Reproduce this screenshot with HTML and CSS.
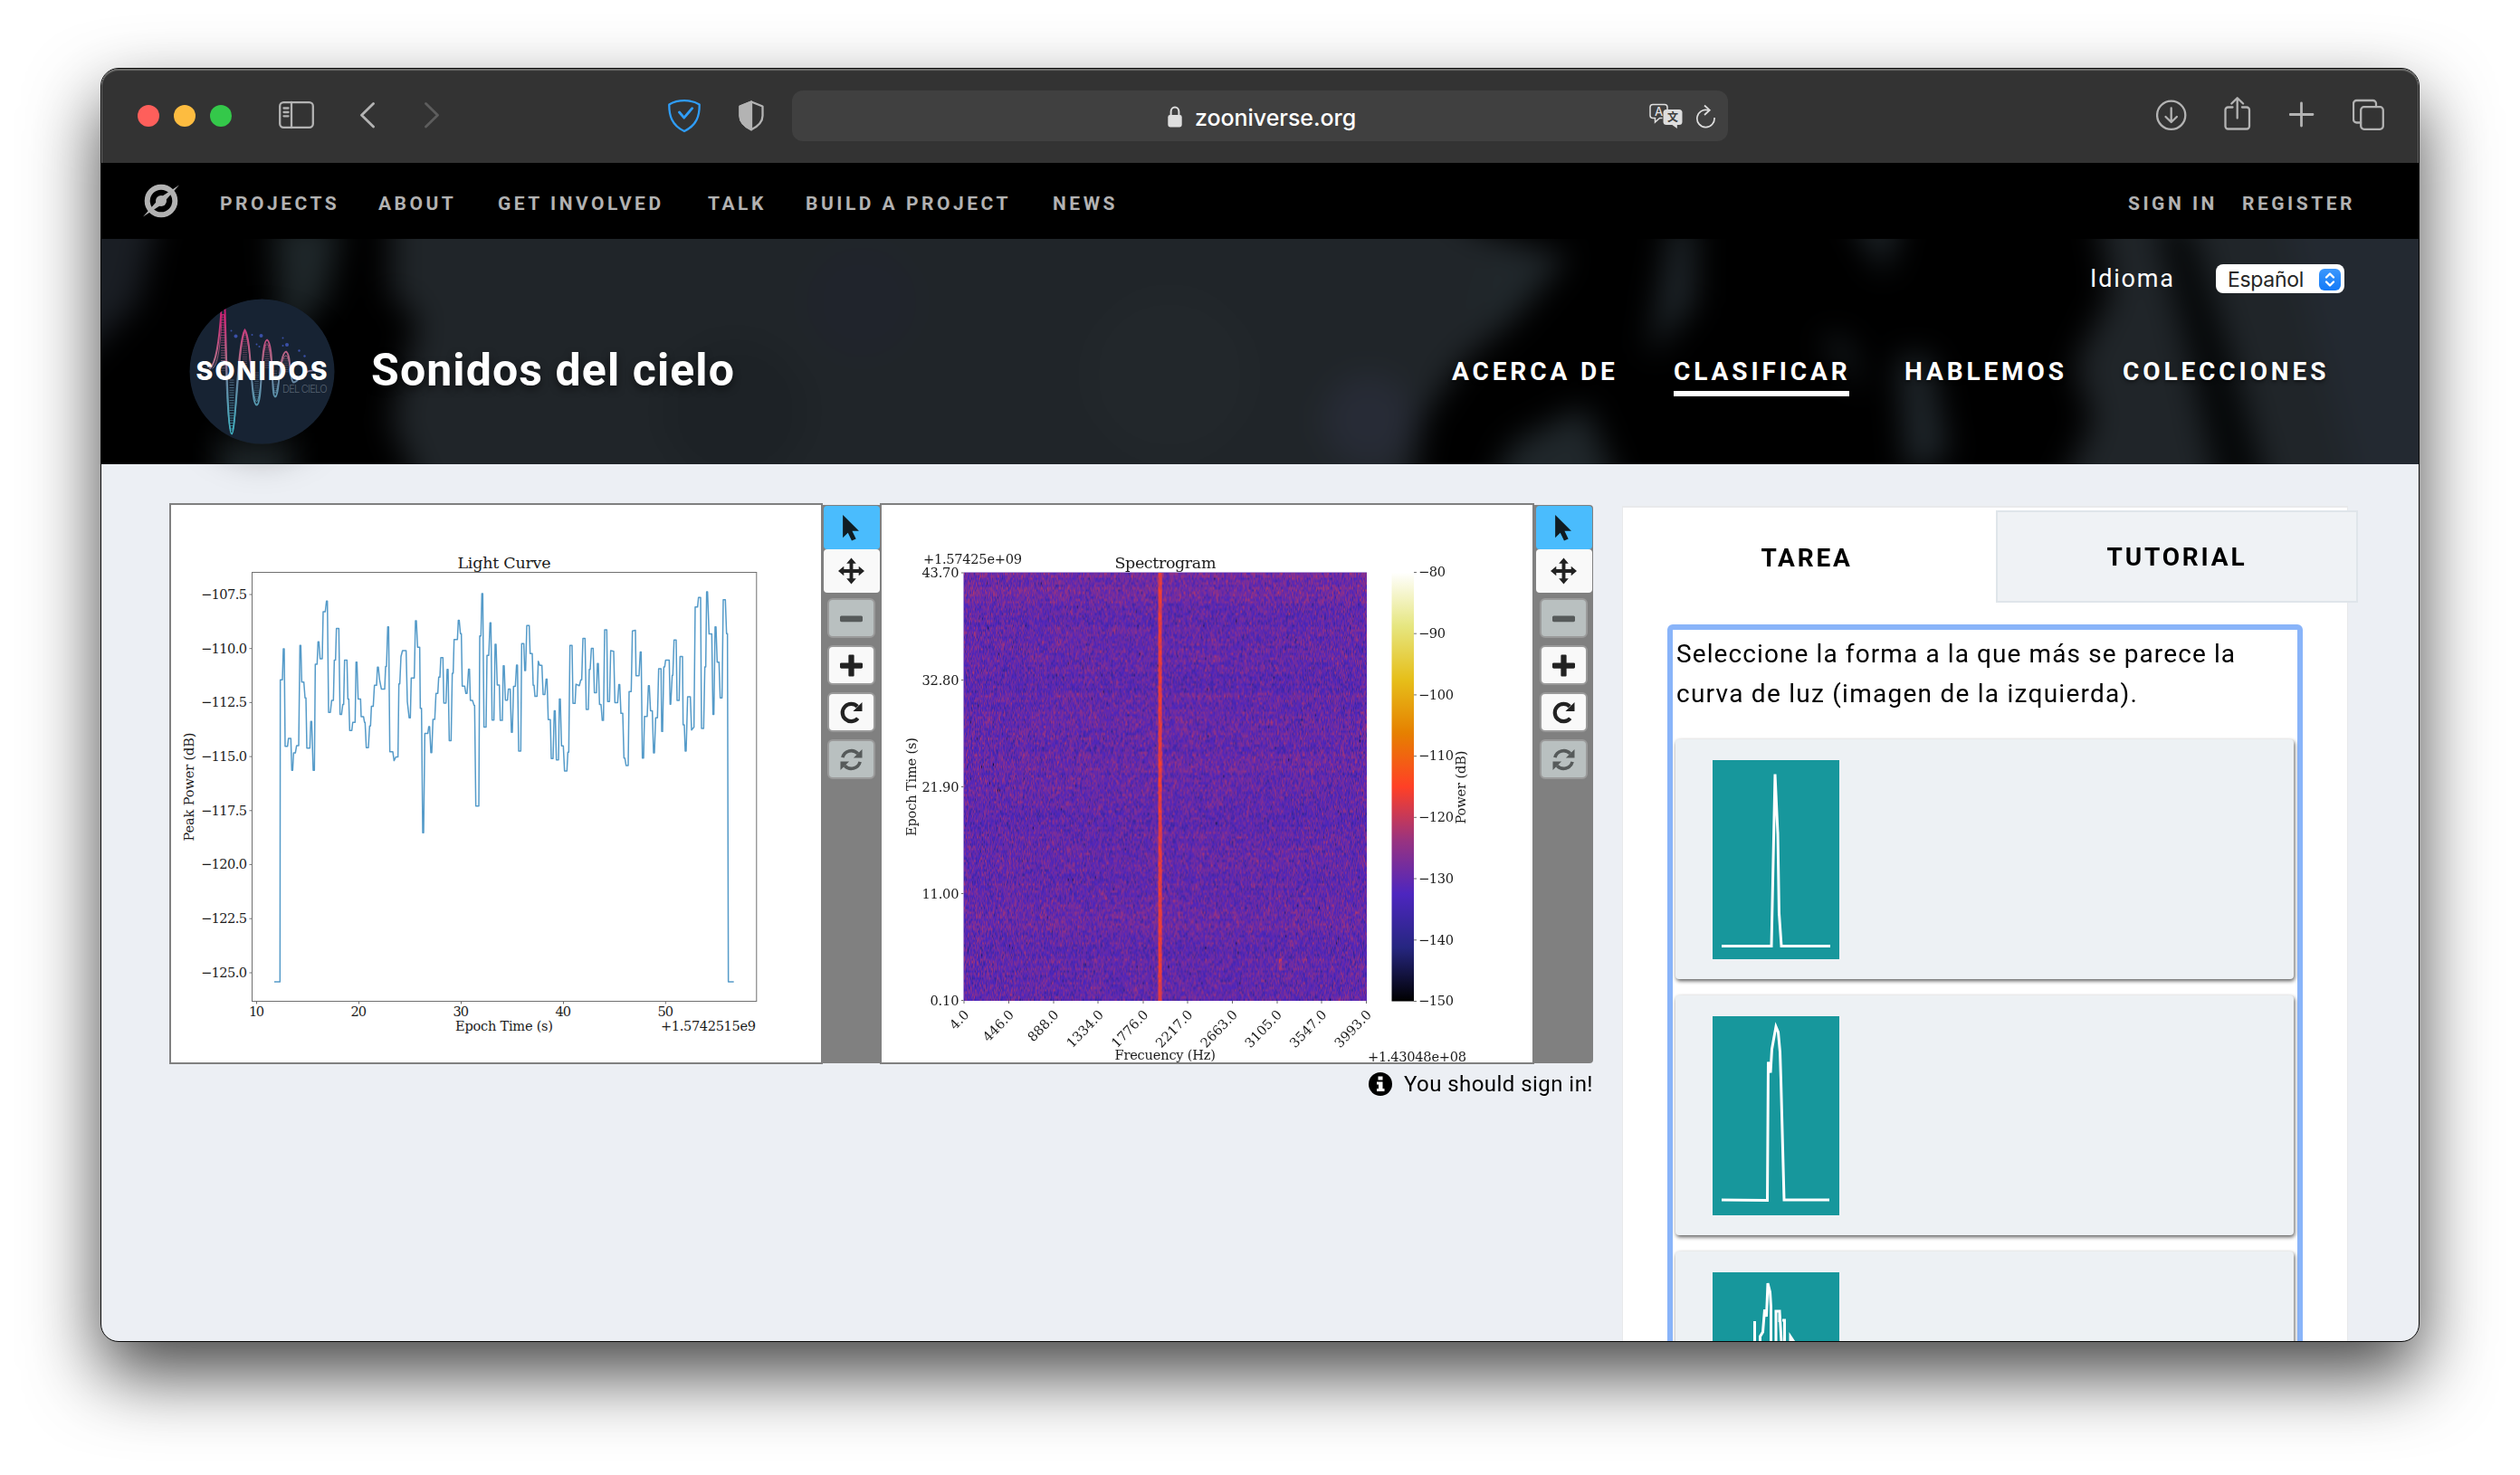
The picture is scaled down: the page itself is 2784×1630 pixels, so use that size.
FILE: index.html
```html
<!DOCTYPE html>
<html lang="es">
<head>
<meta charset="utf-8">
<title>Sonidos del cielo</title>
<link rel="stylesheet" href="styles.css">
</head>
<body>
<div class="window">
  <div class="toolbar">
    <div class="lights"><i class="light red"></i><i class="light amber"></i><i class="light green"></i></div>
    <svg class="ic sidebar" width="39" height="44" viewBox="308 106 39 44"><rect x="309.2" y="113.2" width="36.6" height="27.6" rx="4"/><path d="M322 113v28M313.500 119.500h5M313.500 124h5M313.500 128.300h5" /></svg>
    <svg class="ic back" width="16" height="44" viewBox="398 106 16 44"><path d="M412.500 114.500l-13 12.700 13 12.700" stroke-width="2.8"/></svg>
    <svg class="ic fwd" width="16" height="44" viewBox="469 106 16 44"><path d="M470.500 114.500l13 12.700-13 12.700" stroke-width="2.8"/></svg>
    <svg class="ic guard" width="36" height="44" viewBox="738 106 36 44"><path d="M756 111.200c-6 0-11.500 1.200-16.700 4.200-.2 12 2.700 22.800 16.700 29.600 14-6.800 16.900-17.600 16.700-29.600-5.200-3-10.700-4.200-16.700-4.200z"/><path d="M750.500 124l5.200 6.200 9-10.500" stroke-width="2.8"/></svg>
    <svg class="ic half" width="28" height="44" viewBox="816 106 28 44"><path d="M830 112.500l12.500 5v10.500c0 6.500-4 11-12.500 15.300-8.500-4.300-12.500-8.800-12.500-15.300v-10.500z"/><path d="M830 112.500l-12.500 5v10.500c0 6.500 4 11 12.500 15.300z" class="fill"/></svg>
    <div class="address">
      <svg class="lock" width="16" height="24" viewBox="0 0 16 24"><path d="M3.600 11V6.500a4.400 5 0 0 1 8.800 0V11" fill="none" stroke="#dedede" stroke-width="2"/><rect x=".3" y="10" width="15.400" height="13.500" rx="2.400" fill="#dedede"/></svg>
      <span class="url">zooniverse.org</span>
      <svg class="tr" width="74" height="28" viewBox="1821 114 74 28"><path d="M1842 121v-2.500a3 3 0 0 0-3-3h-13a3 3 0 0 0-3 3v9a3 3 0 0 0 3 3h2.500v4.500l5-4.500h3" fill="none" stroke="#dedede" stroke-width="1.500"/><rect x="1837.500" y="121" width="21" height="17" rx="3.500" fill="#dedede"/><path d="M1846 137l6.800 5v-6z" fill="#dedede"/><text x="1832.700" y="127.500" class="tra">A</text><text x="1848" y="134" class="trz">文</text><path d="M1887.200 121.800A9.600 9.600 0 1 0 1894 130M1883 116.500l5.800 5.200-5.800 5.300" fill="none" stroke="#dedede" stroke-width="1.700"/></svg>
    </div>
    <svg class="ic dl" width="34" height="44" viewBox="2382 106 34 44"><circle cx="2398.700" cy="127.300" r="15.600"/><path d="M2398.700 119.500v15M2392.500 129l6.200 6 6.200-6"/></svg>
    <svg class="ic share" width="30" height="44" viewBox="2457 106 30 44"><path d="M2466.500 118.500h-5a3 3 0 0 0-3 3v18a3 3 0 0 0 3 3h20.500a3 3 0 0 0 3-3v-18a3 3 0 0 0-3-3h-5M2471.700 130.500v-22M2465.300 114.500l6.400-6.300 6.400 6.300"/></svg>
    <svg class="ic plus" width="28" height="44" viewBox="2529 106 28 44"><path d="M2542.500 114v25M2530 126.500h25" stroke-width="2.800"/></svg>
    <svg class="ic tabs" width="36" height="44" viewBox="2599 106 36 44"><rect x="2608.200" y="118.200" width="24.600" height="24.600" rx="3.500"/><path d="M2608 135.500h-4.500a3.500 3.500 0 0 1-3.500-3.500v-17.500a3.500 3.500 0 0 1 3.500-3.500h18a3.500 3.500 0 0 1 3.500 3.500v3.500"/></svg>
  </div>

  <nav class="site">
    <svg class="zoo" width="42" height="40" viewBox="0 0 42 40"><circle cx="21" cy="20" r="15.300" fill="none" stroke="#b2b2b2" stroke-width="6"/><circle cx="21" cy="20" r="6" fill="#b2b2b2"/><path d="M1 37.500L18 18.500l6 4z M41 2.500L24 21.500l-6-4z" fill="#b2b2b2"/></svg>
    <div class="links">
      <a class="s1">PROJECTS</a><a class="s2">ABOUT</a><a class="s3">GET INVOLVED</a><a class="s4">TALK</a><a class="s5">BUILD A PROJECT</a><a class="s6">NEWS</a>
    </div>
    <div class="account"><a class="s7">SIGN IN</a><a class="s8">REGISTER</a></div>
  </nav>

  <header class="hero">
    <svg class="sky" viewBox="0 0 2560 249" preserveAspectRatio="none">
      <defs><filter id="soft" x="-10%" y="-30%" width="120%" height="160%" color-interpolation-filters="sRGB"><feGaussianBlur stdDeviation="17"/></filter></defs>
      <rect width="2560" height="249" fill="#202529"/>
      <g filter="url(#soft)">
        <path d="M-60-60H2620V310H-60z" fill="#202529"/>
        <path d="M-60-40H70L40 70 0 180h-60z" fill="#1a1e24"/>
        <path d="M70-60h250l0 120 30 30-30 110 50 120H-80V190L40 70z" fill="#000"/>
        <path d="M190-20h75l-15 80-50 60zM130 215h80v80h-80z" fill="#1f272a"/>
        <circle cx="840" cy="70" r="60" fill="#20242c"/><circle cx="700" cy="190" r="80" fill="#1d2226"/><circle cx="1180" cy="150" r="90" fill="#22272b"/><circle cx="1400" cy="200" r="50" fill="#272b36"/>
        <path d="M1455-60h745l20 120-40 80 20 60-60 130H1440l20-130 40-60 60-50 60-70-100-30z" fill="#000"/>
        <path d="M1530 25l90-10-50 60-60 20zM1560 225l80-40 40 100h-150z" fill="#20272b"/>
        <path d="M1735-20h25v90l-50 60zM1930-30h60l-20 70zM1900 110h25l25 60zM1985 130h35l20 110-45 20z" fill="#20272c"/>
        <circle cx="2160" cy="110" r="30" fill="#000"/>
        <path d="M2270-20h36l50 160 50 180h-60l-40-190z" fill="#050708"/>
        <path d="M2400-60h230v370h-130z" fill="#232931"/>
      </g>
    </svg>
    <div class="lang"><span class="idioma">Idioma</span><span class="select">Español<svg width="24" height="24" viewBox="0 0 24 24"><defs><linearGradient id="bl" x1="0" y1="0" x2="0" y2="1"><stop offset="0" stop-color="#3b97fc"/><stop offset="1" stop-color="#137af8"/></linearGradient></defs><rect width="24" height="24" rx="6" fill="url(#bl)"/><path d="M8 9.500l4-4 4 4M8 14.500l4 4 4-4" fill="none" stroke="#fff" stroke-width="2.400" stroke-linecap="round" stroke-linejoin="round"/></svg></span></div>
    <div class="brand">
      <svg class="avatar" viewBox="208.500 330.500 161 161">
        <defs><linearGradient id="wave" gradientUnits="userSpaceOnUse" x1="0" y1="342" x2="0" y2="480"><stop offset="0" stop-color="#d61b74"/><stop offset=".4" stop-color="#b56b88"/><stop offset=".55" stop-color="#6c87a4"/><stop offset="1" stop-color="#3fb4c4"/></linearGradient><clipPath id="disc"><circle cx="289" cy="411" r="80"/></clipPath></defs>
        <circle cx="289" cy="411" r="80" fill="#172333"/>
        <g clip-path="url(#disc)" fill="none" stroke="url(#wave)">
          <path d="M231 408c8-6 11-34 13-66h4c2 60 3 138 7.500 138s6-100 14.500-115c8 10 6 83 13 83s4-70 11.500-72c8 4 4 63 9 63s4-48 12-50c6 3 3 30 8 34 7 0 8-14 24-13" stroke-width="1.800"/>
          <path d="M234 408c8-6 9-34 11-60h2c2 55 3 128 8.500 128s8-98 14.500-108c6 8 8 76 13 76s6-62 11.500-64c5 4 6 55 9 55s6-40 12-42c4 3 5 22 8 26" stroke-width="1" opacity=".8"/>
          <path d="M246 348v62M255.500 420v55" stroke-width="5" stroke-dasharray="1 1.800" opacity=".6"/>
          <path d="M270 368v38M283 412v34M294.500 382v26M303 410v27M315.500 394v18" stroke-width="5" stroke-dasharray="1 1.400" opacity=".4"/>
        </g>
        <g fill="#3a50a8"><circle cx="260" cy="372" r="2"/><circle cx="255" cy="366" r="1"/><circle cx="288" cy="371.500" r="2"/><circle cx="278" cy="370.500" r="1"/><circle cx="283" cy="381" r="1"/><circle cx="286" cy="383.500" r="1"/><circle cx="312" cy="374" r="1"/><circle cx="316.500" cy="381.500" r="2"/><circle cx="312" cy="382.500" r="1"/><circle cx="330" cy="388" r="1.200"/><circle cx="336" cy="394" r="1.200"/></g>
        <text x="216" y="420.800" textLength="145" class="lg1">SONIDOS</text>
        <text x="311.500" y="434.500" textLength="49.500" class="lg2">DEL CIELO</text>
      </svg>
      <h1>Sonidos del cielo</h1>
      <nav class="project"><a class="p1">ACERCA DE</a><a class="p2 on">CLASIFICAR</a><a class="p3">HABLEMOS</a><a class="p4">COLECCIONES</a></nav>
    </div>
  </header>

  <main>
    <section class="subject">
      <div class="frames">
        <svg class="plot" width="722" height="620" viewBox="187 556 722 620">
          <g class="axis"><rect x="278.500" y="632.500" width="557.300" height="474" />
          <path d="M275.500 657h3M275.500 716.700h3M275.500 776.400h3M275.500 836.100h3M275.500 895.800h3M275.500 955.400h3M275.500 1015.200h3M275.500 1075h3M283.500 1107v2.500M396.500 1107v2.500M509.500 1107v2.500M622.500 1107v2.500M735.300 1107v2.500"/></g>
          <g class="curve"><g transform="translate(180 550) scale(.33333 .40816)"><path d="M369 1311H388L389 493H396L399 409H402L405 673H413L416 652H424L427 738H430L433 691H439L443 671H450L454 400H457L460 499H467L471 542H474L477 678H487L490 606H493L498 738H502L505 451H511L514 390H517L521 436H528L531 309H538L542 280H545L549 581H555L559 549H565L568 440H572L575 354H583L587 587H592L596 560H599L602 440H610L613 545H616L619 630H626L629 608H637L640 445H643L647 545H655L657 593H665L668 608H670L674 677H681L685 618H688L691 565H697L701 508H708L711 459H714L718 493L724 518H735L738 457H741L745 350H748L752 688H762L766 712L772 702H779L782 504H785L789 430L794 414H806L810 552L816 596H820L823 488H833L837 333H840L844 405H851L853 570H857L861 907H864L868 638H878L881 620H884L888 690H891L895 600H901L905 530H911L914 486H918L921 433H928L931 556H938L942 465H945L949 658H955L959 475H962L965 384H976L979 332H982L986 368H989L992 510H1000L1004 530H1008L1013 464H1016L1019 549H1026L1031 562H1033L1037 835H1047L1050 374H1054"/></g>
          <g transform="translate(520 550) scale(.33333 .40816)"><path d="M30 374H34L37 260H40L44 621H51L54 427H60L64 339H67L71 602H77L81 397H84L88 507H95L98 603H105L108 455H111L115 548H122L125 518H131L135 635H138L142 511H148L152 453H155L159 686H166L169 395H176L179 468H182L186 346H194L197 422H204L207 508H210L213 538H220L224 443L229 454H236L240 533H246L250 491H253L257 601H264L267 706H273L277 577H280L284 710H291L294 545H297L301 672H307L311 740H319L322 689H325L329 400H336L339 557H346L349 505L360 509L365 493H368L372 381H379L383 573H390L393 465H396L400 408H406L410 528H417L420 449H423L427 560H432L436 603H440L444 358H451L454 552H460L464 414L474 416L478 555H487L491 506H494L498 584H504L508 705H511L515 725H522L525 525H532L536 361L546 359L548 482H558L562 418H565L569 705H573L576 592H585L589 509H592L596 577H602L606 691H609L613 596H619L623 463H631L633 633H636L640 458H643L646 440H658L661 559H663L668 481H670L674 385H681L684 549H691L694 430H702L704 615H708L711 686H714L719 539H728L732 629L740 621L744 296H752L755 270H762L765 625H772L776 458H779L782 255H785L790 369H799L803 587H806L810 350H813L817 445H823L827 542H833L837 276H844L848 368H851L854 1311H872"/></g></g>
          <g class="cap"><text x="505.500" y="627.500" textLength="103" class="ttl">Light Curve</text>
          <text x="222" y="661.800" textLength="51">−107.5</text><text x="222" y="721.500" textLength="51">−110.0</text><text x="222" y="781.200" textLength="51">−112.5</text><text x="222" y="840.900" textLength="51">−115.0</text><text x="222" y="900.600" textLength="51">−117.5</text><text x="222" y="960.200" textLength="51">−120.0</text><text x="222" y="1020" textLength="51">−122.5</text><text x="222" y="1079.800" textLength="51">−125.0</text>
          <text x="275" y="1122.500" textLength="17">10</text><text x="387.500" y="1122.500" textLength="17.500">20</text><text x="500.500" y="1122.500" textLength="17.500">30</text><text x="613.500" y="1122.500" textLength="17.500">40</text><text x="726.500" y="1122.500" textLength="17.500">50</text>
          <text x="503" y="1139" textLength="108">Epoch Time (s)</text><text x="730" y="1138.500" textLength="105">+1.5742515e9</text>
          <text transform="translate(213.500 929.500) rotate(-90)" textLength="120">Peak Power (dB)</text></g>
        </svg>
        <div class="tools">
          <span class="tool wide sel"><svg viewBox="0 0 24 32"><path d="M2 1v27l6-6 4.500 9.500 5-2.300L13 20h8z"/></svg></span>
          <span class="tool wide"><svg viewBox="0 0 30 30"><path d="M15 0l5.500 6.500H17V13h6.500V9.500L30 15l-6.500 5.500V17H17v6.500h3.500L15 30l-5.500-6.500H13V17H6.500v3.500L0 15l6.500-5.500V13H13V6.500H9.500z"/></svg></span>
          <span class="tool off"><svg viewBox="0 0 24 24"><rect y="9" width="24" height="6.500" rx="1.500"/></svg></span>
          <span class="tool"><svg viewBox="0 0 24 24"><path d="M9 1.500Q9 .5 10 .5h4q1 0 1 1V9h7.500q1.500 0 1.500 1v4q0 1-1.500 1H15v7.500q0 1-1 1h-4q-1 0-1-1V15H1.500Q0 15 0 14v-4q0-1 1.500-1H9z"/></svg></span>
          <span class="tool"><svg viewBox="0 0 26 26"><path d="M20.500 19.500A10 10 0 1 1 20 6" fill="none" stroke="currentColor" stroke-width="4.400"/><path d="M25.500 1v10.500H15z"/></svg></span>
          <span class="tool off"><svg viewBox="0 0 26 26"><path d="M3 10.500A10.300 10.300 0 0 1 20.500 6M23 15.500A10.300 10.300 0 0 1 5.500 20" fill="none" stroke="currentColor" stroke-width="3.800"/><path d="M25.500 1v10H15.500zM.5 25V15h10z"/></svg></span>
        </div>
        <svg class="plot" width="723" height="620" viewBox="972 556 723 620">
          <defs><linearGradient id="cmr" x1="0" y1="1" x2="0" y2="0"><stop offset="0" stop-color="#000"/><stop offset=".125" stop-color="#262680"/><stop offset=".25" stop-color="#4d26bf"/><stop offset=".375" stop-color="#993380"/><stop offset=".5" stop-color="#ff4026"/><stop offset=".625" stop-color="#e68000"/><stop offset=".75" stop-color="#e6bf1a"/><stop offset=".875" stop-color="#e6e680"/><stop offset="1" stop-color="#fff"/></linearGradient></defs>
          <rect x="1064.500" y="632.500" width="445.500" height="473.500" fill="#612ea8"/>
          <foreignObject x="1064.500" y="632.500" width="445.500" height="473.500"><canvas id="spectrum" width="446" height="182"></canvas></foreignObject>
          <rect x="1537.500" y="632.500" width="24.500" height="474" fill="url(#cmr)"/>
          <path class="axis" d="M1062 633h2.500M1062 751.500h2.500M1062 869.500h2.500M1062 987.500h2.500M1062 1105.500h2.500M1065 1106v3M1114.500 1106v3M1164 1106v3M1213 1106v3M1263 1106v3M1312 1106v3M1361.500 1106v3M1411 1106v3M1460 1106v3M1509.500 1106v3M1562 632.500h3M1562 700.200h3M1562 767.900h3M1562 835.600h3M1562 903.300h3M1562 971h3M1562 1038.800h3M1562 1106.500h3"/>
          <g class="cap"><text x="1231.500" y="628" textLength="112" class="ttl">Spectrogram</text>
          <text x="1020" y="623" textLength="109">+1.57425e+09</text><text x="1511" y="1173" textLength="109">+1.43048e+08</text>
          <text x="1018.500" y="638" textLength="41">43.70</text><text x="1018.500" y="756.500" textLength="41">32.80</text><text x="1018.500" y="874.500" textLength="41">21.90</text><text x="1018.500" y="992.500" textLength="41">11.00</text><text x="1027.500" y="1110.500" textLength="32">0.10</text>
          <text x="1567" y="637.300" textLength="30">−80</text><text x="1567" y="705" textLength="30">−90</text><text x="1567" y="772.700" textLength="39">−100</text><text x="1567" y="840.400" textLength="39">−110</text><text x="1567" y="908.100" textLength="39">−120</text><text x="1567" y="975.800" textLength="39">−130</text><text x="1567" y="1043.600" textLength="39">−140</text><text x="1567" y="1111.300" textLength="39">−150</text>
          <text x="1231.500" y="1170.500" textLength="111.500">Frecuency (Hz)</text>
          <text transform="translate(1012 924) rotate(-90)" textLength="109">Epoch Time (s)</text>
          <text transform="translate(1618.500 910.500) rotate(-90)" textLength="81">Power (dB)</text>
          <g text-anchor="end"><text transform="translate(1071.500 1122) rotate(-46)">4.0</text><text transform="translate(1121 1122) rotate(-46)">446.0</text><text transform="translate(1170.500 1122) rotate(-46)">888.0</text><text transform="translate(1220 1122) rotate(-46)">1334.0</text><text transform="translate(1269.500 1122) rotate(-46)">1776.0</text><text transform="translate(1318.500 1122) rotate(-46)">2217.0</text><text transform="translate(1368 1122) rotate(-46)">2663.0</text><text transform="translate(1417 1122) rotate(-46)">3105.0</text><text transform="translate(1466.500 1122) rotate(-46)">3547.0</text><text transform="translate(1516 1122) rotate(-46)">3993.0</text></g></g>
        </svg>
        <div class="tools last">
          <span class="tool wide sel"><svg viewBox="0 0 24 32"><path d="M2 1v27l6-6 4.500 9.500 5-2.300L13 20h8z"/></svg></span>
          <span class="tool wide"><svg viewBox="0 0 30 30"><path d="M15 0l5.500 6.500H17V13h6.500V9.500L30 15l-6.500 5.500V17H17v6.500h3.500L15 30l-5.500-6.500H13V17H6.500v3.500L0 15l6.500-5.500V13H13V6.500H9.500z"/></svg></span>
          <span class="tool off"><svg viewBox="0 0 24 24"><rect y="9" width="24" height="6.500" rx="1.500"/></svg></span>
          <span class="tool"><svg viewBox="0 0 24 24"><path d="M9 1.500Q9 .5 10 .5h4q1 0 1 1V9h7.500q1.500 0 1.500 1v4q0 1-1.500 1H15v7.500q0 1-1 1h-4q-1 0-1-1V15H1.500Q0 15 0 14v-4q0-1 1.500-1H9z"/></svg></span>
          <span class="tool"><svg viewBox="0 0 26 26"><path d="M20.500 19.500A10 10 0 1 1 20 6" fill="none" stroke="currentColor" stroke-width="4.400"/><path d="M25.500 1v10.500H15z"/></svg></span>
          <span class="tool off"><svg viewBox="0 0 26 26"><path d="M3 10.500A10.300 10.300 0 0 1 20.500 6M23 15.500A10.300 10.300 0 0 1 5.500 20" fill="none" stroke="currentColor" stroke-width="3.800"/><path d="M25.500 1v10H15.500zM.5 25V15h10z"/></svg></span>
        </div>
      </div>
      <p class="notice"><svg width="26" height="26" viewBox="0 0 26 26"><circle cx="13" cy="13" r="13"/><path d="M10.500 4.500h5v4h-5zM9 10.500h6.500v7.500h2v3H9v-3h2v-4.500H9z" fill="#fff"/></svg><span>You should sign in!</span></p>
    </section>

    <section class="task">
      <div class="tabrow"><span class="tab">TAREA</span><span class="tab idle">TUTORIAL</span></div>
      <div class="question">
        <p>Seleccione la forma a la que más se parece la<br><span class="q2">curva de luz (imagen de la izquierda).</span></p>
        <div class="answer"><svg width="140" height="220" viewBox="1892 840 140 220"><path d="M1902 1045.500h55l4-190 3 66v-2l1.500 92v-2l2.500 36h54"/></svg></div>
        <div class="answer"><svg width="140" height="220" viewBox="1892 1123 140 220"><path d="M1902 1326l50.500.5 1-153 2.500 12 1.500-26 4.500-25 2.500 6 2 22 1 31 1 38 2.500 94.500h50"/></svg></div>
        <div class="answer"><svg width="140" height="220" viewBox="1892 1407 140 220"><path d="M1902 1610h30M1938.500 1500v-39M1944.500 1500v-22l3-5 2-25 2 8 1.500-37 2.500 10 1 16v60M1962 1500v-50h4v12-12l3 50M1969 1460h2.500v40M1978 1500v-22l4 6"/></svg></div>
      </div>
    </section>
  </main>
</div>
<script src="spectrum.js"></script>
</body>
</html>
```
FILE: styles.css
```css
* { box-sizing: border-box; }
body { margin: 0; height: 1630px; padding: 75px 0 0 111px; background: #fff; overflow: hidden; font-family: Roboto, "Liberation Sans", sans-serif; }
svg { display: block; flex: none; }
.window { width: 2562px; height: 1408px; border: 1px solid #0a0a0a; border-radius: 20px; overflow: hidden; background: #eceff4; box-shadow: 0 36px 80px rgba(0, 0, 0, .72); }

.toolbar { display: flex; align-items: center; height: 104px; padding-left: 40px; background: #333; box-shadow: inset 0 2px 1px #6c6c6a, inset 1px 0 #666, inset -1px 0 #666; border-radius: 19px 19px 0 0; }
.toolbar > * { flex: none; }
.lights { display: flex; gap: 16px; }
.light { width: 24px; height: 24px; border-radius: 50%; }
.red { background: #fe5f5b; }
.amber { background: #fdbc40; }
.green { background: #34c84a; }
.ic { fill: none; stroke: #b3b3b3; stroke-width: 2.3; stroke-linecap: round; stroke-linejoin: round; }
.fill { fill: #b3b3b3; }
.sidebar { margin-left: 52px; }
.back { margin-left: 51px; }
.fwd { margin-left: 55px; stroke: #5d5d5d; }
.guard { margin-left: 253px; stroke: #2f9df8; }
.half { margin-left: 42px; }
.dl { margin-left: 473px; }
.share { margin-left: 41px; }
.plus { margin-left: 42px; }
.tabs { margin-left: 42px; }
.address { display: flex; align-items: center; width: 1034px; height: 56px; margin-left: 31px; padding-left: 415px; border-radius: 12px; background: #404040; color: #fff; }
.lock { margin-top: 2px; }
.url { width: 178px; margin-left: 14px; font: 500 25px/30px Inter, sans-serif; letter-spacing: -.05px; white-space: nowrap; padding-top: 3px; }
.tr { margin-left: 323px; }
.tra { font: 500 13px Inter, sans-serif; fill: #dedede; text-anchor: middle; }
.trz { font: 700 12px "Noto Sans CJK SC", sans-serif; fill: #404040; text-anchor: middle; }

.site { display: flex; align-items: center; height: 84px; padding: 0 70px 0 45px; background: #000; color: #b2b2b2; font-weight: 700; font-size: 21px; white-space: nowrap; }
.links { display: grid; grid-template-columns: 175px 132px 232px 108px 273px 90px; margin-left: 44px; padding-top: 5px; }
.account { display: grid; grid-template-columns: 126px 125px; margin-left: auto; padding-top: 5px; }
.site a { letter-spacing: 3.5px; }

.hero { position: relative; z-index: 1; height: 249px; padding-top: 28px; color: #fff; }
.sky { position: absolute; inset: 0; width: 100%; height: 249px; }
.lang { position: relative; display: flex; justify-content: flex-end; align-items: center; height: 32px; padding-right: 82px; }
.idioma { font-size: 27px; letter-spacing: 1.8px; width: 139px; }
.select { display: flex; justify-content: space-between; align-items: center; width: 142px; height: 32px; padding: 0 4px 0 13px; border-radius: 8px; background: #fff; color: #262626; font: 23px/30px Inter, sans-serif; letter-spacing: -.3px; padding-top: 1px; }
.brand { position: relative; display: flex; align-items: center; height: 161px; margin-top: 6px; padding: 0 97px; }
.avatar { width: 161px; height: 161px; border-radius: 50%; box-shadow: 0 20px 40px -8px rgba(0, 0, 0, .35); }
.lg1 { font: 800 28.500px Inter, sans-serif; fill: #fff; }
.lg2 { font: 300 11px Inter, sans-serif; fill: #566271; }
h1 { margin: -3px 0 0 40px; font-size: 50px; line-height: 60px; font-weight: 700; letter-spacing: 1.1px; white-space: nowrap; text-shadow: 0 4px 8px rgba(0, 0, 0, .5); }
.project { display: grid; grid-template-columns: 245px 255px 241px 230px; margin-left: auto; font-size: 28px; line-height: 30px; font-weight: 700; letter-spacing: 3.9px; white-space: nowrap; text-shadow: 0 2px 4px rgba(0, 0, 0, .5); }
.project a { justify-self: start; padding: 12px 0 6px; border-bottom: 6px solid transparent; }
.project .on { width: 194px; border-color: #fff; }

main { display: flex; align-items: flex-start; gap: 32px; height: 969px; padding: 43px 0 0 75px; }
.subject { width: 1573px; flex: none; }
.frames { display: flex; align-items: flex-start; }
.plot { background: #fff; outline: 2px solid #808080; outline-offset: -2px; }
.axis, .axis rect { fill: none; stroke: #707070; stroke-width: 1; }
.curve path { fill: none; stroke: #559bc9; stroke-width: 1.5; vector-effect: non-scaling-stroke; stroke-linejoin: round; }
.cap { font-family: "DejaVu Serif", serif; font-size: 14.6px; fill: #1c1c1c; }
.ttl { font-size: 17.5px; }
#spectrum { display: block; width: 445.5px; height: 473.5px; }
.tools { display: flex; flex-direction: column; align-items: center; gap: 8px; width: 63px; height: 617px; margin-top: 2px; background: #808080; padding-top: 1px; }
.last { width: 65px; border-radius: 0 4px 4px 0; }
.tool { display: flex; justify-content: center; align-items: center; width: 53px; height: 44px; flex: none; border: 2px solid #9a9a9a; border-radius: 6px; background: #f9f9f9; color: #222; }
.tool svg { width: 25px; height: 25px; fill: currentColor; }
.wide { width: 62px; height: 48px; border-width: 0; border-radius: 4px; }
.wide + .wide { margin-top: -8px; margin-bottom: -2px; }
.wide svg { width: 29px; height: 30px; }
.sel { background: #4abcfd; color: #101c22; }
.off { background: #b9c0c0; color: #565a5a; }
.notice { display: flex; justify-content: flex-end; align-items: center; gap: 13px; margin: 7px 0 0; font-size: 24px; line-height: 30px; letter-spacing: .45px; white-space: nowrap; }

.task { width: 802px; height: 924px; margin-top: 3px; border: 1px solid #e8e9eb; border-top-width: 2px; background: #fff; }
.tabrow { display: flex; width: 812px; margin-top: 3px; height: 102px; font-size: 28px; font-weight: 700; letter-spacing: 2.8px; }
.tab { display: flex; width: 412px; align-items: center; justify-content: center; padding-right: 6px; padding-top: 3px; }
.idle { width: 400px; padding-right: 0; padding-top: 1px; background: #eff2f5; border: 2px solid #dfe5ea; }
.question { width: 702px; height: 900px; margin: 24px 0 0 49px; padding: 5px 3px 0; border: 6px solid #89b4f9; border-radius: 6px; }
.question p { margin: 0 0 28px 1px; font-size: 28px; line-height: 44px; letter-spacing: 1.1px; white-space: nowrap; }
.q2 { letter-spacing: 1.25px; }
.answer { width: 683px; height: 265px; margin-bottom: 18px; padding: 23px 41px; border-radius: 4px; background: #edf1f4; box-shadow: 1px 2px 4px rgba(0, 0, 0, .65); }
.answer svg { background: #17979c; fill: none; stroke: #fff; stroke-width: 3; }
```
FILE: spectrum.js
```js
// Fills the spectrogram with seeded receiver noise and the carrier line.
var canvas = document.getElementById('spectrum');
var ctx = canvas.getContext('2d');
var W = canvas.width, H = canvas.height;
var image = ctx.createImageData(W, H);
var seed = 7;
function rnd() { seed = (seed * 1664525 + 1013904223) % 4294967296; return seed / 4294967296; }
var stops = [[0,0,0],[38,38,128],[77,38,191],[153,51,128],[255,64,38],[230,128,0],[230,191,26],[230,230,128],[255,255,255]];
function colour(v) {
  v = Math.max(0, Math.min(.999, v)) * 8;
  var i = Math.floor(v), f = v - i;
  return stops[i].map(function (c, k) { return c + (stops[i + 1][k] - c) * f; });
}
var hot = [[.03, .07], [.12, .14], [.28, .29], [.42, .46], [.60, .62], [.72, .73], [.90, .925]];
for (var y = 0; y < H; y++) {
  var t = y / H;
  var band = Math.sin(t * 41) * .007 + Math.sin(t * 17 + 1) * .005 + (rnd() - .5) * .018;
  hot.forEach(function (h) { if (t > h[0] && t < h[1]) band += .012; });
  if (y < 2) band += .03;
  for (var x = 0; x < W; x++) {
    var v = .283 + band + (rnd() + rnd() + rnd() - 1.5) * .095;
    if (rnd() < .03) v -= .07 * rnd();
    if (rnd() < .003) v -= .15;
    var d = Math.abs(x - 216.5);
    if (d < 1.6) v = .47 + (rnd() - .5) * .08;
    else if (d < 4) v += .03 * rnd();
    if (Math.abs(x - 350) < 2 && t > .9 && t < .925) v += .08;
    var c = colour(v), p = (y * W + x) * 4;
    image.data[p] = c[0]; image.data[p + 1] = c[1]; image.data[p + 2] = c[2]; image.data[p + 3] = 255;
  }
}
ctx.putImageData(image, 0, 0);
```
